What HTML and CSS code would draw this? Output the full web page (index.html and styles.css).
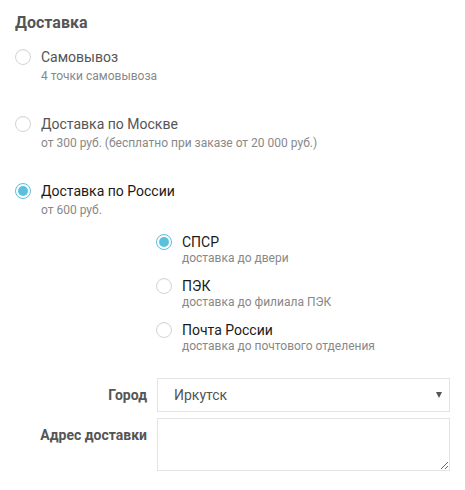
FILE: index.html
```html
<!DOCTYPE html>
<html lang="ru">
<head>
<meta charset="utf-8">
<title>Доставка</title>
<link rel="stylesheet" href="styles.css">
</head>
<body>
<div class="delivery">
  <h2 class="title">Доставка</h2>
  <div class="options">
    <div class="option">
      <span class="radio"></span>
      <div class="text">
        <div class="name">Самовывоз</div>
        <div class="desc">4 точки самовывоза</div>
      </div>
    </div>
    <div class="option">
      <span class="radio"></span>
      <div class="text">
        <div class="name">Доставка по Москве</div>
        <div class="desc">от 300 руб. (бесплатно при заказе от 20 000 руб.)</div>
      </div>
    </div>
    <div class="option is-checked">
      <span class="radio"></span>
      <div class="text">
        <div class="name">Доставка по России</div>
        <div class="desc">от 600 руб.</div>
      </div>
    </div>
  </div>
  <div class="options sub">
    <div class="option is-checked">
      <span class="radio"></span>
      <div class="text">
        <div class="name">СПСР</div>
        <div class="desc">доставка до двери</div>
      </div>
    </div>
    <div class="option dark">
      <span class="radio"></span>
      <div class="text">
        <div class="name">ПЭК</div>
        <div class="desc">доставка до филиала ПЭК</div>
      </div>
    </div>
    <div class="option dark">
      <span class="radio"></span>
      <div class="text">
        <div class="name">Почта России</div>
        <div class="desc">доставка до почтового отделения</div>
      </div>
    </div>
  </div>
  <div class="form">
    <label class="field-label" for="city">Город</label>
    <div class="select-wrap">
      <select id="city" class="select"><option>Иркутск</option></select>
      <span class="caret"></span>
    </div>
    <label class="field-label" for="addr">Адрес доставки</label>
    <textarea id="addr" class="textarea"></textarea>
  </div>
</div>
</body>
</html>
```
FILE: styles.css
```css
* { box-sizing: border-box; }
body {
  margin: 0;
  background: #fff;
  font-family: Roboto, "Noto Sans", sans-serif;
  color: #555;
}
.delivery {
  padding: 13px 15px 0;
}
.title {
  margin: 0;
  font-size: 16px;
  line-height: 20px;
  font-weight: 700;
  color: #555;
}
.options {
  margin-top: 14px;
  display: flex;
  flex-direction: column;
  gap: 29px;
}
.option {
  display: flex;
  align-items: flex-start;
}
.radio {
  flex: none;
  width: 16px;
  height: 16px;
  margin-top: 2px;
  margin-right: 10px;
  border: 1px solid #d4d4d4;
  border-radius: 50%;
  background: #fff;
  box-shadow: inset 0 1px 1px rgba(0,0,0,0.04);
  position: relative;
}
.is-checked .radio {
  border-color: #5bc0de;
}
.is-checked .radio::after {
  content: "";
  position: absolute;
  left: 2px;
  top: 2px;
  width: 10px;
  height: 10px;
  border-radius: 50%;
  background: #5bc0de;
}
.name {
  font-size: 14px;
  line-height: 20px;
  color: #555;
}
.is-checked .name, .dark .name {
  color: #1a1a1a;
}
.desc {
  margin-top: 1px;
  font-size: 12px;
  line-height: 17px;
  color: #888;
}
.options.sub {
  margin-left: 141px;
  gap: 11px;
}
.sub .radio {
  margin-top: 1px;
}
.sub .name {
  line-height: 18px;
}
.sub .desc {
  margin-top: 0;
  line-height: 15px;
}
.form {
  margin-top: 24px;
  display: grid;
  grid-template-columns: 132px 293px;
  column-gap: 10px;
  row-gap: 6px;
}
.field-label {
  padding-top: 7px;
  font-size: 14px;
  line-height: 20px;
  font-weight: 700;
  text-align: right;
  color: #555;
}
.select-wrap {
  position: relative;
}
.select {
  display: block;
  width: 100%;
  height: 34px;
  margin: 0;
  padding: 0 30px 0 16px;
  border: 1px solid #e3e3e3;
  border-radius: 0;
  background: #fff;
  font-family: Roboto, sans-serif;
  font-size: 14px;
  color: #555;
  appearance: none;
  -webkit-appearance: none;
  outline: none;
}
.caret {
  position: absolute;
  right: 8px;
  top: 14px;
  width: 0;
  height: 0;
  border-left: 3.5px solid transparent;
  border-right: 3.5px solid transparent;
  border-top: 6px solid #555;
  pointer-events: none;
}
.textarea {
  display: block;
  width: 293px;
  height: 53px;
  margin: 0;
  padding: 6px 10px;
  border: 1px solid #e3e3e3;
  border-radius: 0;
  font-family: Roboto, sans-serif;
  font-size: 14px;
  color: #555;
  resize: both;
  outline: none;
}
```
